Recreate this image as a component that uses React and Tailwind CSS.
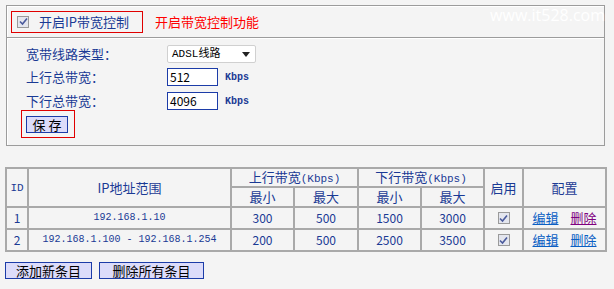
const rows = [
  { id: 1, ip: '192.168.1.10', upMin: 300, upMax: 500, downMin: 1500, downMax: 3000, visited: true },
  { id: 2, ip: '192.168.1.100 - 192.168.1.254', upMin: 200, upMax: 500, downMin: 2500, downMax: 3500, visited: false },
];

function Check() {
  return (
    <span className="inline-flex h-[12px] w-[12px] items-center justify-center border border-[#9a9a9a] bg-[#e4e6ee]">
      <svg width="9" height="9" viewBox="0 0 9 9">
        <path d="M1 4.5 L3.5 7 L8 1.5" fill="none" stroke="#4a5a9c" strokeWidth="1.6" />
      </svg>
    </span>
  );
}

const cell = 'border border-[#a9a9a9] text-center p-0 leading-[14px]';
const mono = "font-['Liberation_Mono','Noto_Sans_CJK_SC',monospace]";

export default function App() {
  return (
    <div className="relative h-[289px] w-[614px] overflow-hidden bg-[#f4f4f4] pt-[5px] font-['Noto_Sans_CJK_SC','Liberation_Sans',sans-serif] text-[12px] text-[#1a3a94]">
      {/* watermark */}
      <div className="absolute right-[9px] top-[3px] font-['Open_Sans',sans-serif] text-[16px] text-white">www.it528.com</div>

      {/* settings panel */}
      <div className="ml-[6px] w-[599px] border border-[#9c9c9c] shadow-[inset_1px_1px_0_#fff]">
        <div className="flex h-[31px] items-center pl-[4px]">
          <div className="flex h-[22px] w-[132px] items-center border border-[#e00000] pl-[5px]">
            <Check />
            <span className="ml-[10px] text-[13px] leading-none text-[#1a3a94]">开启IP带宽控制</span>
          </div>
          <span className="ml-[12px] text-[13px] leading-none text-[#ff0000]">开启带宽控制功能</span>
        </div>
        <div className="border-t border-[#9c9c9c] shadow-[inset_0_1px_0_#fff] pb-[7px] pl-[19px] pt-[7px]">
          <div className="flex h-[18px] items-center">
            <span className="w-[141px] text-[13px]">宽带线路类型：</span>
            <div className="flex h-[18px] w-[89px] items-center justify-between rounded-[2px] border border-[#d0d0d0] bg-white pl-[4px] pr-[5px] text-black">
              <span className={`${mono} text-[11px]`}>ADSL线路</span>
              <svg width="8" height="5" viewBox="0 0 8 5"><path d="M0 0 H8 L4 5 Z" fill="#222" /></svg>
            </div>
          </div>
          <div className="mt-[5px] flex h-[18px] items-center">
            <span className="w-[141px] text-[13px]">上行总带宽：</span>
            <div className="flex h-[18px] w-[51px] items-center border border-[#1c3ca8] bg-white pl-[2px] text-[12px] text-black">512</div>
            <span className={`${mono} ml-[7px] text-[10px] font-bold`}>Kbps</span>
          </div>
          <div className="mt-[6px] flex h-[18px] items-center">
            <span className="w-[141px] text-[13px]">下行总带宽：</span>
            <div className="flex h-[18px] w-[51px] items-center border border-[#1c3ca8] bg-white pl-[2px] text-[12px] text-black">4096</div>
            <span className={`${mono} ml-[7px] text-[10px] font-bold`}>Kbps</span>
          </div>
          <div className="-ml-[5px] h-[28px] w-[54px] border border-[#e00000] pl-[4px] pt-[5px]">
            <button className="flex h-[17px] w-[42px] items-center justify-center border border-[#1c3ca8] bg-[#dcdcfa] text-[13px] leading-none text-black">
              保&nbsp;存
            </button>
          </div>
        </div>
      </div>

      {/* rules table */}
      <div className="ml-[5px] mt-[21px]">
        <table className="w-[600px] table-fixed border-separate border-spacing-0 border border-[#a9a9a9]">
          <colgroup>
            <col className="w-[22px]" />
            <col className="w-[203px]" />
            <col className="w-[63px]" />
            <col className="w-[64px]" />
            <col className="w-[63px]" />
            <col className="w-[63px]" />
            <col className="w-[39px]" />
            <col className="w-[83px]" />
          </colgroup>
          <thead>
            <tr className="h-[19px]">
              <th rowSpan={2} className={`${cell} ${mono} font-normal text-[11px]`}>ID</th>
              <th rowSpan={2} className={`${cell} font-normal text-[13px]`}>IP地址范围</th>
              <th colSpan={2} className={`${cell} font-normal text-[13px]`}>上行带宽<span className={`${mono} text-[11px]`}>(Kbps)</span></th>
              <th colSpan={2} className={`${cell} font-normal text-[13px]`}>下行带宽<span className={`${mono} text-[11px]`}>(Kbps)</span></th>
              <th rowSpan={2} className={`${cell} font-normal text-[13px]`}>启用</th>
              <th rowSpan={2} className={`${cell} font-normal text-[13px]`}>配置</th>
            </tr>
            <tr className="h-[20px]">
              <th className={`${cell} font-normal text-[13px]`}>最小</th>
              <th className={`${cell} font-normal text-[13px]`}>最大</th>
              <th className={`${cell} font-normal text-[13px]`}>最小</th>
              <th className={`${cell} font-normal text-[13px]`}>最大</th>
            </tr>
          </thead>
          <tbody>
            {rows.map((r) => (
              <tr key={r.id} className="h-[22px]">
                <td className={`${cell} text-[12px]`}>{r.id}</td>
                <td className={`${cell} ${mono} text-[10px]`}>{r.ip}</td>
                <td className={`${cell} text-[12px]`}>{r.upMin}</td>
                <td className={`${cell} text-[12px]`}>{r.upMax}</td>
                <td className={`${cell} text-[12px]`}>{r.downMin}</td>
                <td className={`${cell} text-[12px]`}>{r.downMax}</td>
                <td className={cell}>
                  <div className="flex h-[14px] items-center justify-center"><Check /></div>
                </td>
                <td className={`${cell} text-[13px]`}>
                  <div className="flex items-center justify-center gap-[12px]">
                    <a className="text-[#0b5fc4] underline">编辑</a>
                    <a className={r.visited ? 'text-[#800080] underline' : 'text-[#0b5fc4] underline'}>删除</a>
                  </div>
                </td>
              </tr>
            ))}
          </tbody>
        </table>
      </div>

      {/* bottom buttons */}
      <div className="ml-[5px] mt-[10px] flex gap-[7px]">
        <button className="flex h-[17px] w-[87px] items-center justify-center border border-[#1c3ca8] bg-[#dcdcfa] text-[13px] leading-none text-black">添加新条目</button>
        <button className="flex h-[17px] w-[105px] items-center justify-center border border-[#1c3ca8] bg-[#dcdcfa] text-[13px] leading-none text-black">删除所有条目</button>
      </div>
    </div>
  );
}
